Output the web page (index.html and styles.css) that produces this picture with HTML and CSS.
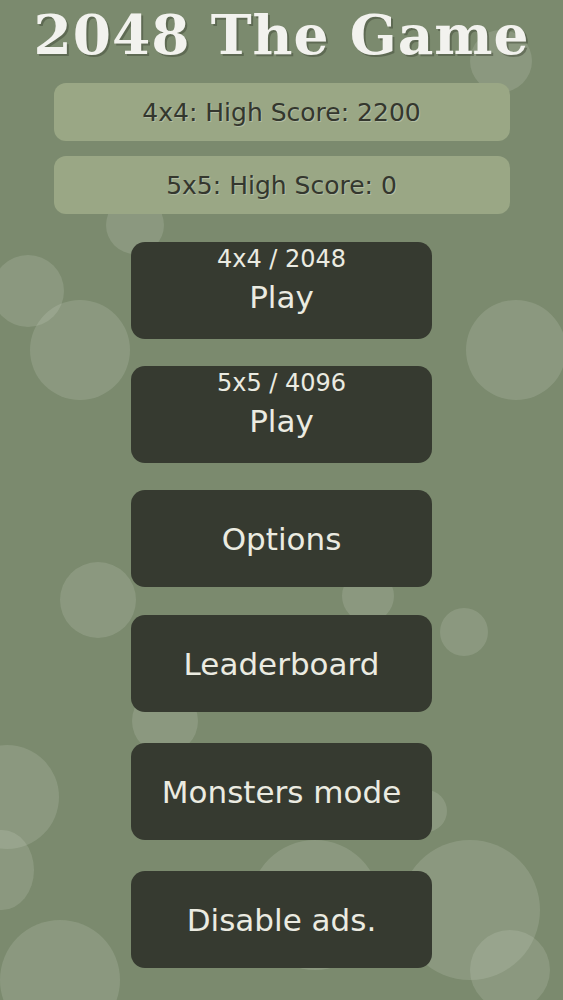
FILE: index.html
```html
<!DOCTYPE html>
<html lang="en">
<head>
    <link rel="stylesheet" href="styles.css">
    <meta charset="UTF-8">
    <meta name="viewport" content="width=device-width, initial-scale=1.0">
    <title>2048 The Game</title>
</head>
<body>
    <div class="bokeh">
        <span class="dot" style="left:470px;top:30px;width:62px;height:62px"></span>
        <span class="dot" style="left:106px;top:196px;width:58px;height:58px"></span>
        <span class="dot" style="left:-8px;top:255px;width:72px;height:72px"></span>
        <span class="dot" style="left:30px;top:300px;width:100px;height:100px"></span>
        <span class="dot" style="left:466px;top:300px;width:100px;height:100px"></span>
        <span class="dot" style="left:60px;top:562px;width:76px;height:76px"></span>
        <span class="dot" style="left:342px;top:570px;width:52px;height:52px"></span>
        <span class="dot" style="left:440px;top:608px;width:48px;height:48px"></span>
        <span class="dot" style="left:132px;top:688px;width:66px;height:66px"></span>
        <span class="dot" style="left:-45px;top:745px;width:104px;height:104px"></span>
        <span class="dot" style="left:405px;top:790px;width:42px;height:42px"></span>
        <span class="dot" style="left:-30px;top:830px;width:64px;height:80px"></span>
        <span class="dot" style="left:250px;top:840px;width:130px;height:130px"></span>
        <span class="dot" style="left:400px;top:840px;width:140px;height:140px"></span>
        <span class="dot" style="left:0px;top:920px;width:120px;height:120px"></span>
        <span class="dot" style="left:470px;top:930px;width:80px;height:80px"></span>
    </div>
    <div class="page">
        <h1 class="title">2048 The Game</h1>
        <div class="score">4x4: High Score: 2200</div>
        <div class="score">5x5: High Score: 0</div>
        <div class="menu">
            <button class="btn two">
                <span class="sub">4x4 / 2048</span>
                <span class="main">Play</span>
            </button>
            <button class="btn two">
                <span class="sub">5x5 / 4096</span>
                <span class="main">Play</span>
            </button>
            <button class="btn"><span class="main">Options</span></button>
            <button class="btn"><span class="main">Leaderboard</span></button>
            <button class="btn"><span class="main">Monsters mode</span></button>
            <button class="btn"><span class="main">Disable ads.</span></button>
        </div>
    </div>
</body>
</html>
```

FILE: styles.css
```css
*{
    margin: 0;
    padding: 0;
    box-sizing: border-box;
    font-family: "DejaVu Sans", sans-serif;
}
html, body{
    height: 100%;
}
body{
    background: #7b8a6e;
    overflow: hidden;
    position: relative;
}
.bokeh{
    position: absolute;
    inset: 0;
    overflow: hidden;
}
.dot{
    position: absolute;
    border-radius: 50%;
    background: rgba(225, 232, 215, 0.16);
}
.page{
    position: relative;
    display: flex;
    flex-direction: column;
    align-items: center;
}
.title{
    font-family: "DejaVu Serif", serif;
    font-weight: bold;
    font-size: 55px;
    line-height: 66px;
    color: #f2f2ee;
    letter-spacing: 1px;
    margin-top: 2px;
    height: 66px;
    text-shadow: 2px 2px 0 rgba(60, 66, 52, 0.45);
}
.score{
    width: 456px;
    height: 58px;
    margin-top: 15px;
    border-radius: 12px;
    background: #9aa785;
    color: #34372e;
    font-size: 25px;
    display: flex;
    justify-content: center;
    align-items: center;
    text-shadow: 1px 1px 0 rgba(255, 255, 255, 0.25);
}
.score + .score{
    margin-top: 15px;
}
.menu{
    display: flex;
    flex-direction: column;
    gap: 27px;
    margin-top: 28px;
}
.btn{
    width: 301px;
    height: 97px;
    border: 0;
    border-radius: 14px;
    background: #363a30;
    color: #ebebe1;
    display: flex;
    flex-direction: column;
    justify-content: center;
    align-items: center;
}
.btn.two{
    justify-content: flex-start;
    padding-top: 2px;
}
.btn .sub{
    font-size: 24px;
    line-height: 30px;
}
.btn .main{
    font-size: 31px;
    line-height: 46px;
}
.btn:nth-child(4){
    margin-top: 1px;
}
.btn:nth-child(5){
    margin-top: 4px;
}
.btn:nth-child(6){
    margin-top: 4px;
}
```
